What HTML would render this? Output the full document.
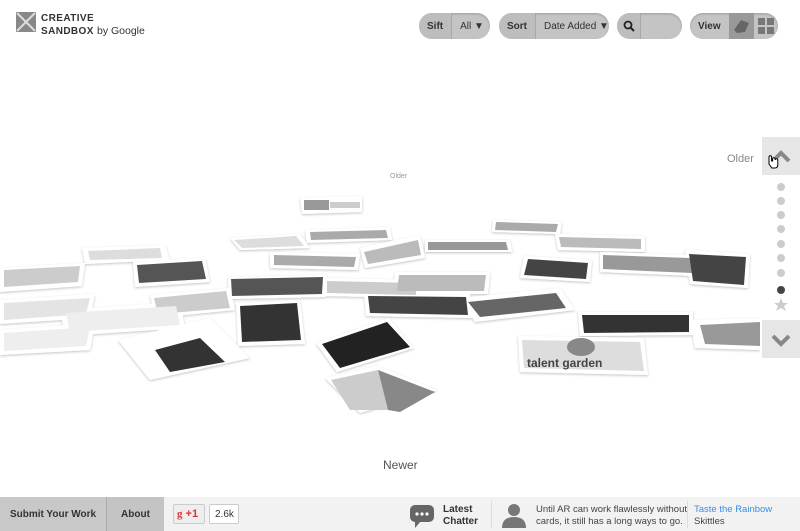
<!DOCTYPE html>
<html><head><meta charset="utf-8"><style>
*{margin:0;padding:0;box-sizing:border-box}
body{width:800px;height:531px;background:#fff;font-family:"Liberation Sans",sans-serif;position:relative;overflow:hidden}
.pill{position:absolute;top:13px;height:26px;border-radius:13px;background:#c4c4c4;font-size:10px;color:#333;display:flex;align-items:center;overflow:hidden;box-shadow:inset 0 1px 2px rgba(0,0,0,.2);white-space:nowrap}
.pill span{padding:0 8px;height:100%;display:flex;align-items:center;white-space:nowrap}
.b{font-weight:bold;background:#bdbdbd;border-right:1px solid #a8a8a8}
.foot{position:absolute;left:0;top:497px;width:800px;height:34px;background:#f2f2f2}
</style></head><body>
<svg style="position:absolute;left:16px;top:12px" width="20" height="20"><rect width="20" height="20" fill="#888"/><path d="M1 1L19 19M19 1L1 19" stroke="#ddd" stroke-width="2"/></svg>
<div style="position:absolute;left:41px;top:13px;font-size:10px;font-weight:bold;color:#333;line-height:12px;letter-spacing:.4px">CREATIVE<br>SANDBOX <span style="font-weight:normal;letter-spacing:0;font-size:10.5px">by Google</span></div>

<div class="pill" style="left:419px;width:71px"><span class="b">Sift</span><span>All&nbsp;▼</span></div>
<div class="pill" style="left:499px;width:110px"><span class="b">Sort</span><span>Date Added&nbsp;▼</span></div>
<div class="pill" style="left:617px;width:65px"><span class="b" style="width:24px;justify-content:center;padding:0"><svg width="12" height="12"><circle cx="5" cy="5" r="3.5" stroke="#222" stroke-width="1.8" fill="none"/><path d="M7.5 7.5L11 11" stroke="#222" stroke-width="2"/></svg></span></div>
<div class="pill" style="left:690px;width:88px"><span class="b" style="border:none;background:none">View</span><span style="background:#999;width:26px;padding:0;justify-content:center"><svg width="18" height="16"><path d="M2 12L9 2L17 5L13 14L5 15Z" fill="#666"/></svg></span><span style="padding:0 4px"><svg width="16" height="16"><rect x="0" y="0" width="7" height="7" fill="#777"/><rect x="9" y="0" width="7" height="7" fill="#777"/><rect x="0" y="9" width="7" height="7" fill="#777"/><rect x="9" y="9" width="7" height="7" fill="#777"/></svg></span></div>

<div style="position:absolute;left:390px;top:173px;font-size:7px;color:#999">Older</div>
<div style="position:absolute;left:727px;top:153px;font-size:11px;color:#888">Older</div>
<div style="position:absolute;left:383px;top:458px;font-size:12px;color:#555">Newer</div>

<div style="position:absolute;left:762px;top:137px;width:38px;height:38px;background:#e6e6e6"></div>
<div style="position:absolute;left:762px;top:320px;width:38px;height:38px;background:#e6e6e6"></div>
<svg style="position:absolute;left:762px;top:137px" width="38" height="225">
<path d="M11 24L19 16L27 24" stroke="#888" stroke-width="4" fill="none"/>
<path d="M11 199L19 207L27 199" stroke="#888" stroke-width="4" fill="none"/>
<g fill="#ccc"><circle cx="19" cy="50" r="4"/><circle cx="19" cy="64" r="4"/><circle cx="19" cy="78" r="4"/><circle cx="19" cy="92" r="4"/><circle cx="19" cy="107" r="4"/><circle cx="19" cy="121" r="4"/><circle cx="19" cy="136" r="4"/></g>
<circle cx="19" cy="153" r="4" fill="#444"/>
<path d="M19 161L21 166L26 166L22 169L24 174L19 171L14 174L16 169L12 166L17 166Z" fill="#ccc"/>
<path d="M7 27v-7a1.3 1.3 0 0 1 2.6 0v4h1v-2a1.3 1.3 0 0 1 2.6 0v1a1.3 1.3 0 0 1 2.6 0v5q0 3-3 3h-3z" fill="#fff" stroke="#000" stroke-width="1"/>
</svg>

<svg style="position:absolute;left:0;top:190px" width="760" height="225">
<defs><filter id="s"><feDropShadow dx="0" dy="1" stdDeviation="1.2" flood-color="#000" flood-opacity=".25"/></filter></defs>
<g filter="url(#s)" fill="#fff">
<polygon points="300,8 362,6 362,22 302,24"/>
<polygon points="82,58 165,55 170,70 85,74"/>
<polygon points="0,78 85,73 82,96 0,102"/>
<polygon points="0,110 95,104 90,128 0,134"/>
<polygon points="0,140 95,133 90,160 0,165"/>
<polygon points="230,48 300,44 310,58 240,60"/>
<polygon points="305,40 390,37 392,50 307,53"/>
<polygon points="425,50 510,50 512,62 425,62"/>
<polygon points="360,58 420,45 425,68 365,78"/>
<polygon points="493,30 562,32 560,44 492,42"/>
<polygon points="555,44 645,46 645,62 558,60"/>
<polygon points="600,62 693,65 695,86 600,82"/>
<polygon points="270,62 360,64 358,80 270,78"/>
<polygon points="133,72 205,68 210,92 135,97"/>
<polygon points="228,87 327,85 326,107 229,109"/>
<polygon points="324,88 420,90 420,108 324,106"/>
<polygon points="395,82 490,82 488,104 393,104"/>
<polygon points="364,103 470,104 472,128 366,126"/>
<polygon points="460,108 560,98 575,120 475,132"/>
<polygon points="524,66 592,70 590,92 520,88"/>
<polygon points="685,60 750,64 748,98 690,94"/>
<polygon points="150,105 230,98 235,120 155,128"/>
<polygon points="60,120 180,112 185,138 65,146"/>
<polygon points="236,113 300,110 305,154 238,156"/>
<polygon points="118,150 210,128 250,168 150,190"/>
<polygon points="316,153 389,128 414,158 337,182"/>
<polygon points="325,188 378,176 437,200 360,223"/>
<polygon points="578,122 693,122 693,145 580,146"/>
<polygon points="518,146 644,148 648,185 520,182"/>
<polygon points="690,130 760,128 760,160 695,158"/>
</g>
<g>
<rect x="304" y="10" width="25" height="10" fill="#999"/><rect x="330" y="12" width="30" height="6" fill="#ccc"/>
<polygon points="88,61 160,58 162,68 90,70" fill="#ddd"/>
<polygon points="4,80 80,76 78,92 4,97" fill="#ccc"/>
<polygon points="4,113 90,108 86,124 4,130" fill="#e4e4e4"/>
<polygon points="4,143 90,137 86,156 4,161" fill="#eee"/>
<polygon points="234,50 296,46 304,56 242,58" fill="#ddd"/>
<polygon points="310,42 386,40 388,48 311,50" fill="#aaa"/>
<polygon points="428,52 506,52 508,60 428,60" fill="#999"/>
<polygon points="364,62 418,50 421,65 368,74" fill="#bbb"/>
<polygon points="496,32 558,34 556,42 495,40" fill="#aaa"/>
<polygon points="559,47 641,49 641,59 561,57" fill="#bbb"/>
<polygon points="603,65 690,68 692,83 603,79" fill="#999"/>
<polygon points="274,65 356,67 354,77 274,75" fill="#aaa"/>
<polygon points="137,75 202,71 206,89 139,93" fill="#555"/>
<polygon points="231,89 323,87 322,104 232,106" fill="#555"/>
<polygon points="327,91 416,93 416,105 327,103" fill="#ccc"/>
<polygon points="399,85 486,85 484,101 397,101" fill="#bbb"/>
<polygon points="368,106 466,107 468,125 370,123" fill="#444"/>
<polygon points="468,112 556,103 566,118 480,127" fill="#666"/>
<polygon points="528,69 588,73 586,89 524,85" fill="#444"/>
<polygon points="689,64 746,67 744,95 693,91" fill="#444"/>
<polygon points="154,108 226,101 230,118 158,124" fill="#ccc"/>
<polygon points="66,123 176,116 180,135 70,142" fill="#eee"/>
<polygon points="240,116 297,113 301,150 242,152" fill="#333"/>
<polygon points="155,160 200,148 225,172 170,182" fill="#333"/>
<polygon points="322,154 387,132 410,157 340,178" fill="#222"/>
<polygon points="331,190 378,180 388,220 350,220" fill="#ccc"/>
<polygon points="378,180 435,202 400,222 388,220" fill="#888"/>
<polygon points="582,125 689,125 689,142 584,143" fill="#333"/>
<polygon points="522,150 640,152 644,181 524,178" fill="#ddd"/>
<ellipse cx="581" cy="157" rx="14" ry="9" fill="#888"/>
<text x="527" y="177" font-family="Liberation Sans" font-weight="bold" font-size="12" fill="#444">talent garden</text>
<polygon points="700,135 760,132 760,156 705,154" fill="#999"/>
</g>
</svg>

<div class="foot">
<div style="position:absolute;left:0;top:0;width:107px;height:34px;background:#c8c8c8;border-right:1px solid #aaa;font-size:10px;font-weight:bold;color:#333;display:flex;align-items:center;justify-content:center">Submit Your Work</div>
<div style="position:absolute;left:107px;top:0;width:57px;height:34px;background:#c4c4c4;font-size:10px;font-weight:bold;color:#333;display:flex;align-items:center;justify-content:center">About</div>
<div style="position:absolute;left:173px;top:7px;width:32px;height:20px;background:#eee;border:1px solid #ccc;border-radius:2px;font-size:11px;color:#d33;font-weight:bold;padding:3px 0 0 3px"><span style="font-family:'Liberation Serif'">g</span> +1</div>
<div style="position:absolute;left:209px;top:7px;width:30px;height:20px;background:#fff;border:1px solid #ccc;border-radius:2px;font-size:10px;color:#333;padding:4px 0 0 5px">2.6k</div>
<svg style="position:absolute;left:410px;top:8px" width="24" height="24"><rect x="0" y="0" width="24" height="17" rx="5" fill="#666"/><path d="M5 16L5 23L11 16Z" fill="#666"/><circle cx="7" cy="9" r="1.6" fill="#fff"/><circle cx="12" cy="9" r="1.6" fill="#fff"/><circle cx="17" cy="9" r="1.6" fill="#fff"/></svg>
<div style="position:absolute;left:443px;top:7px;font-size:10px;font-weight:bold;color:#333;line-height:12px">Latest<br>Chatter</div>
<div style="position:absolute;left:491px;top:4px;width:1px;height:27px;background:#ddd"></div>
<svg style="position:absolute;left:500px;top:5px" width="28" height="26"><circle cx="14" cy="8" r="6" fill="#777"/><path d="M2 26Q2 15 14 15Q26 15 26 26Z" fill="#777"/></svg>
<div style="position:absolute;left:536px;top:7px;font-size:9.5px;color:#444;line-height:12px">Until AR can work flawlessly without<br>cards, it still has a long ways to go.</div>
<div style="position:absolute;left:687px;top:4px;width:1px;height:27px;background:#ddd"></div>
<div style="position:absolute;left:694px;top:7px;font-size:9.5px;color:#444;line-height:12px"><span style="color:#3a8ee6">Taste the Rainbow</span><br>Skittles</div>
</div>
</body></html>
